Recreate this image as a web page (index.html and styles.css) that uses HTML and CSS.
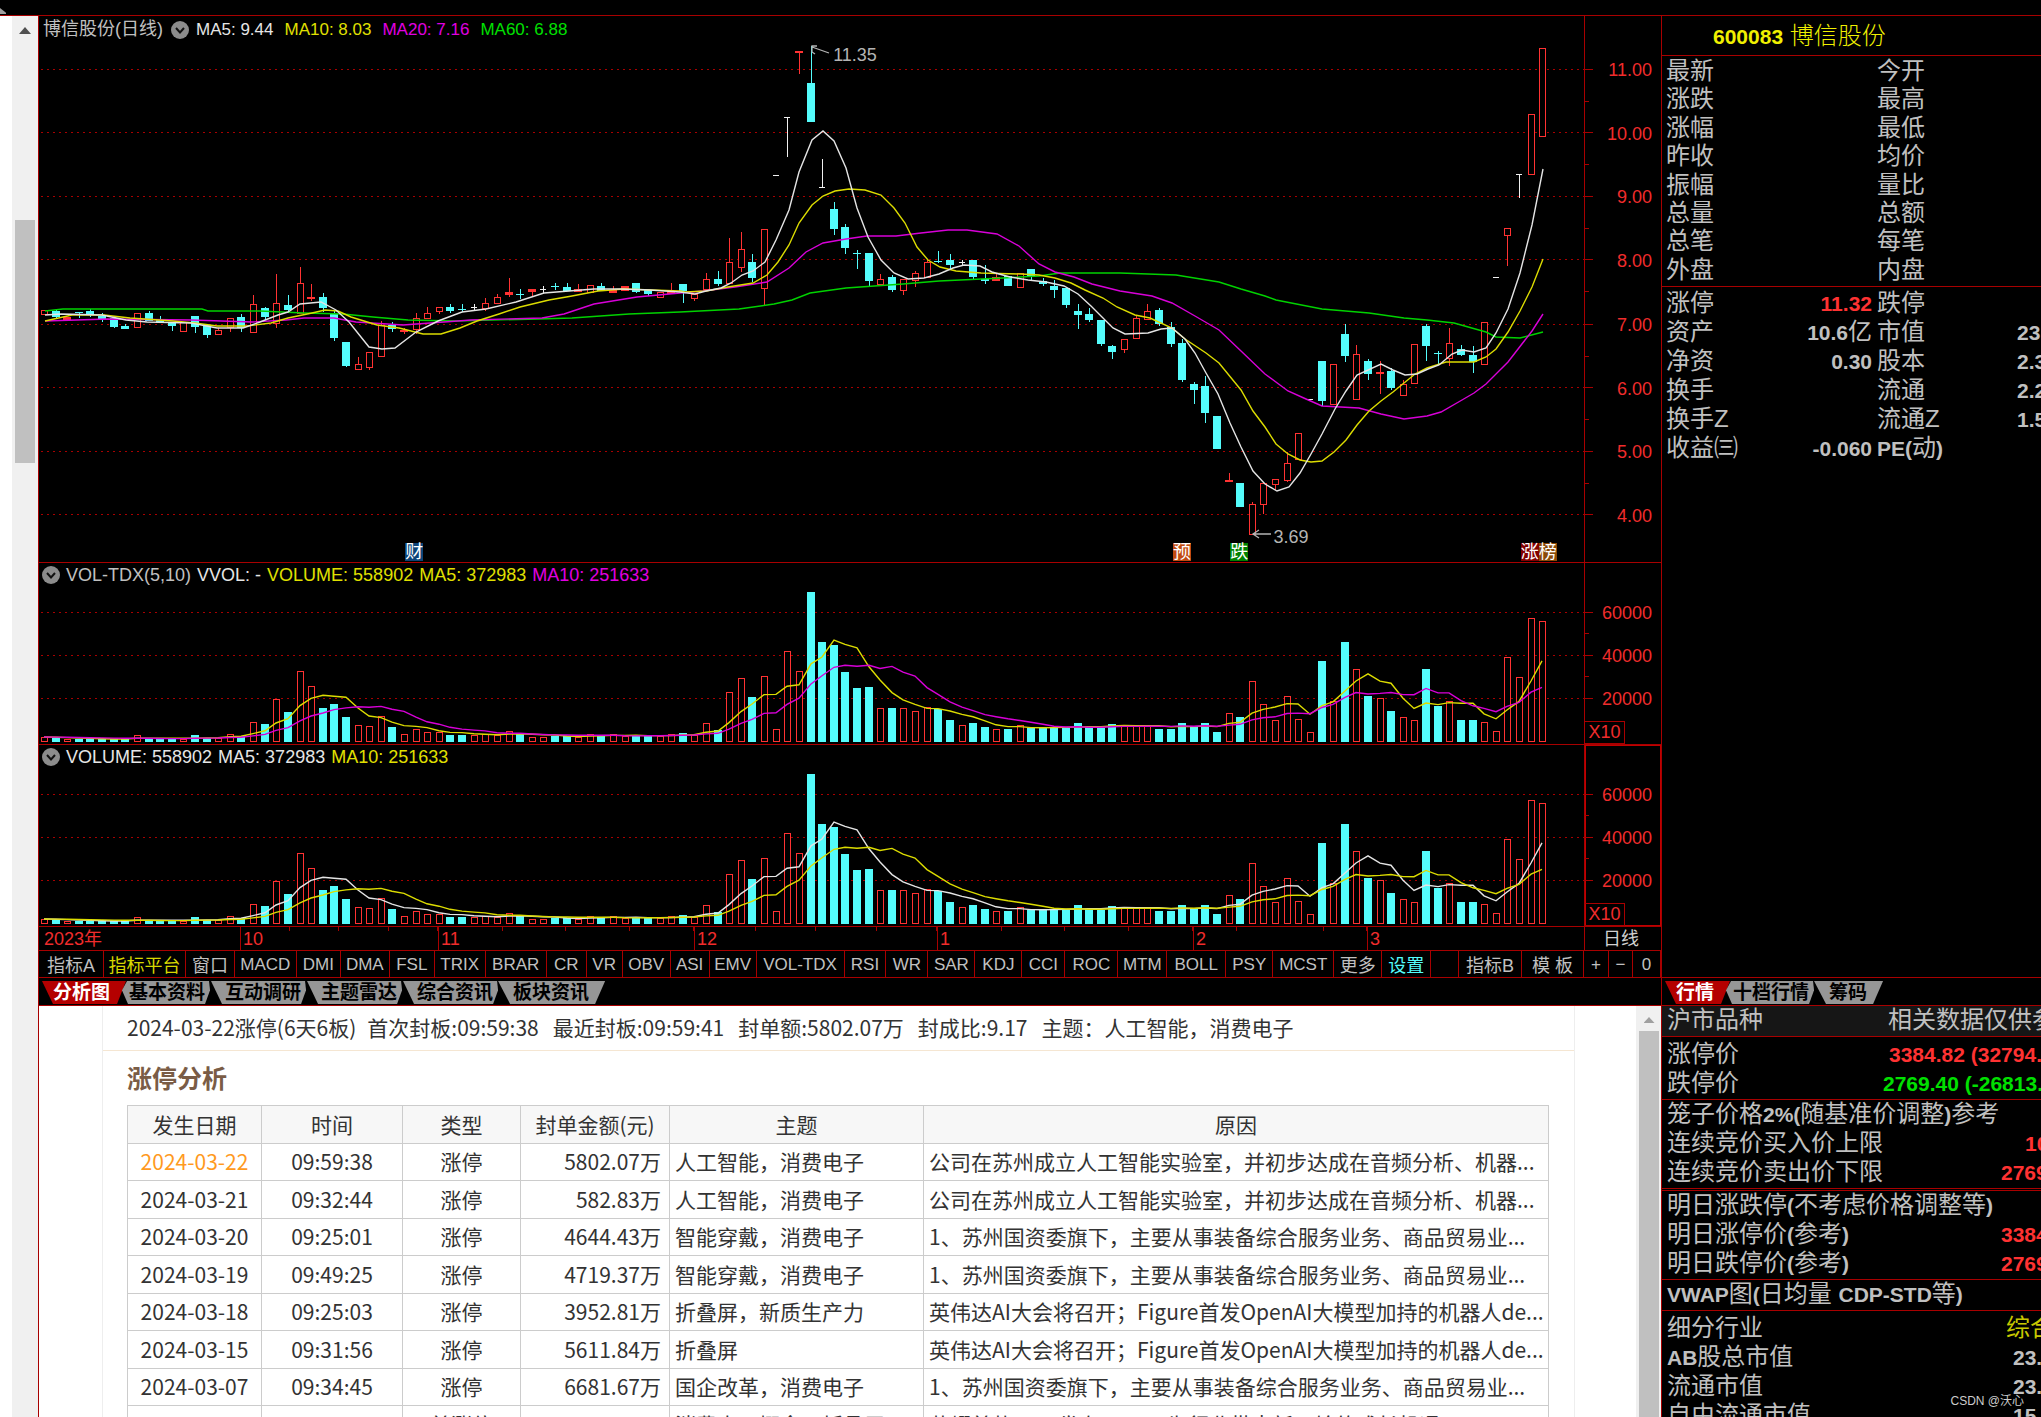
FILE: index.html
```html
<!DOCTYPE html>
<html lang="zh-CN">
<head>
<meta charset="utf-8">
<title>博信股份 600083</title>
<link rel="stylesheet" href="styles.css">
</head>
<body>
<div class="app">
  <div class="topbar"><span class="corner"></span></div>

  <aside class="gutter">
    <div class="gutter-track"><span class="arrow"></span><span class="gutter-thumb"></span></div>
  </aside>

  <main class="charts">
    <section class="pane pane-price">
      <div class="plot">
        <svg class="canvas" id="price" viewBox="39 16 1545 546" preserveAspectRatio="none"></svg>
        <header class="legend legend-price">
          <span class="name">博信股份(日线)</span>
          <svg class="chev" viewBox="0 0 18 18"><circle cx="9" cy="9" r="9" fill="#8c8c8c"/><path d="M5 7l4 4.500 4-4.500" fill="none" stroke="#111" stroke-width="2"/></svg>
          <span class="w">MA5: 9.44</span><span class="y">MA10: 8.03</span><span class="m">MA20: 7.16</span><span class="g">MA60: 6.88</span>
        </header>
        <span class="mark mark-high">11.35</span>
        <span class="mark mark-low">3.69</span>
        <span class="events ev-fin"><i class="blue">财</i></span>
        <span class="events ev-pre"><i class="orange">预</i></span>
        <span class="events ev-fall"><i class="green">跌</i></span>
        <span class="events ev-last"><i class="darkred">涨</i><i class="brown">榜</i></span>
      </div>
      <div class="axis axis-price">
        <svg class="canvas" id="price-axis" viewBox="0 16 76 546" preserveAspectRatio="none"></svg>
        <span>11.00</span><span>10.00</span><span>9.00</span><span>8.00</span><span>7.00</span><span>6.00</span><span>5.00</span><span>4.00</span>
      </div>
    </section>

    <section class="pane pane-vol">
      <div class="plot">
        <svg class="canvas" id="vol1" viewBox="39 0 1545 181" preserveAspectRatio="none"></svg>
        <header class="legend legend-vol">
          <svg class="chev" viewBox="0 0 18 18"><circle cx="9" cy="9" r="9" fill="#8c8c8c"/><path d="M5 7l4 4.500 4-4.500" fill="none" stroke="#111" stroke-width="2"/></svg>
          <span class="name">VOL-TDX(5,10)</span><span class="w">VVOL: -</span><span class="y">VOLUME: 558902</span><span class="y">MA5: 372983</span><span class="m">MA10: 251633</span>
        </header>
      </div>
      <div class="axis axis-vol">
        <svg class="canvas" id="vol1-axis" viewBox="0 0 76 181" preserveAspectRatio="none"></svg>
        <span>60000</span><span>40000</span><span>20000</span>
        <em class="unit">X10</em>
      </div>
    </section>

    <section class="pane pane-vol">
      <div class="plot">
        <svg class="canvas" id="vol2" viewBox="39 0 1545 181" preserveAspectRatio="none"></svg>
        <header class="legend legend-vol">
          <svg class="chev" viewBox="0 0 18 18"><circle cx="9" cy="9" r="9" fill="#8c8c8c"/><path d="M5 7l4 4.500 4-4.500" fill="none" stroke="#111" stroke-width="2"/></svg>
          <span class="w">VOLUME: 558902</span><span class="w">MA5: 372983</span><span class="y">MA10: 251633</span>
        </header>
      </div>
      <div class="axis axis-vol axis-active">
        <svg class="canvas" id="vol2-axis" viewBox="0 0 76 181" preserveAspectRatio="none"></svg>
        <span>60000</span><span>40000</span><span>20000</span>
        <em class="unit">X10</em>
      </div>
    </section>

    <div class="dates">
      <div class="months"><span>2023年</span><span>10</span><span>11</span><span>12</span><span>1</span><span>2</span><span>3</span></div>
      <div class="period">日线</div>
    </div>

    <nav class="tools">
      <button class="cn">指标A</button><button class="cn on">指标平台</button><button class="cn">窗口</button><button>MACD</button><button>DMI</button><button>DMA</button><button>FSL</button><button>TRIX</button><button>BRAR</button><button>CR</button><button>VR</button><button>OBV</button><button>ASI</button><button>EMV</button><button>VOL-TDX</button><button>RSI</button><button>WR</button><button>SAR</button><button>KDJ</button><button>CCI</button><button>ROC</button><button>MTM</button><button>BOLL</button><button>PSY</button><button>MCST</button><button class="cn">更多</button><button class="cn set">设置</button><span></span><button class="cn">指标B</button><button class="cn">模 板</button><button>+</button><button>−</button><button>0</button>
    </nav>
  </main>

  <aside class="quote">
    <h1><b>600083</b> 博信股份</h1>
    <dl class="grid8">
      <dt>最新</dt><dd></dd><dt>今开</dt><dd></dd>
      <dt>涨跌</dt><dd></dd><dt>最高</dt><dd></dd>
      <dt>涨幅</dt><dd></dd><dt>最低</dt><dd></dd>
      <dt>昨收</dt><dd></dd><dt>均价</dt><dd></dd>
      <dt>振幅</dt><dd></dd><dt>量比</dt><dd></dd>
      <dt>总量</dt><dd></dd><dt>总额</dt><dd></dd>
      <dt>总笔</dt><dd></dd><dt>每笔</dt><dd></dd>
      <dt>外盘</dt><dd></dd><dt>内盘</dt><dd></dd>
    </dl>
    <dl class="grid6">
      <dt>涨停</dt><dd class="r"><b>11.32</b></dd><dt>跌停</dt><dd></dd>
      <dt>资产</dt><dd><b>10.6</b>亿</dd><dt>市值</dt><dd class="cut"><b>23.</b></dd>
      <dt>净资</dt><dd><b>0.30</b></dd><dt>股本</dt><dd class="cut"><b>2.3</b></dd>
      <dt>换手</dt><dd></dd><dt>流通</dt><dd class="cut"><b>2.2</b></dd>
      <dt>换手Z</dt><dd></dd><dt>流通Z</dt><dd class="cut"><b>1.5</b></dd>
      <dt>收益㈢</dt><dd><b>-0.060</b></dd><dt><b>PE(</b>动<b>)</b></dt><dd></dd>
    </dl>
  </aside>

  <section class="lower">
    <nav class="tabs">
      <button class="tab first">分析图</button><button class="tab">基本资料</button><button class="tab">互动调研</button><button class="tab">主题雷达</button><button class="tab">综合资讯</button><button class="tab last">板块资讯</button>
    </nav>
    <div class="doc">
      <article class="sheet">
        <p class="summary"><span>2024-03-22涨停(6天6板)</span><span>首次封板:09:59:38</span><span>最近封板:09:59:41</span><span>封单额:5802.07万</span><span>封成比:9.17</span><span>主题：人工智能，消费电子</span></p>
        <h2>涨停分析</h2>
        <table>
          <colgroup><col class="c1"><col class="c2"><col class="c3"><col class="c4"><col class="c5"><col></colgroup>
          <thead><tr><th>发生日期</th><th>时间</th><th>类型</th><th>封单金额(元)</th><th>主题</th><th>原因</th></tr></thead>
          <tbody>
            <tr><td class="hot">2024-03-22</td><td>09:59:38</td><td>涨停</td><td>5802.07万</td><td>人工智能，消费电子</td><td>公司在苏州成立人工智能实验室，并初步达成在音频分析、机器...</td></tr>
            <tr><td>2024-03-21</td><td>09:32:44</td><td>涨停</td><td>582.83万</td><td>人工智能，消费电子</td><td>公司在苏州成立人工智能实验室，并初步达成在音频分析、机器...</td></tr>
            <tr><td>2024-03-20</td><td>09:25:01</td><td>涨停</td><td>4644.43万</td><td>智能穿戴，消费电子</td><td>1、苏州国资委旗下，主要从事装备综合服务业务、商品贸易业...</td></tr>
            <tr><td>2024-03-19</td><td>09:49:25</td><td>涨停</td><td>4719.37万</td><td>智能穿戴，消费电子</td><td>1、苏州国资委旗下，主要从事装备综合服务业务、商品贸易业...</td></tr>
            <tr><td>2024-03-18</td><td>09:25:03</td><td>涨停</td><td>3952.81万</td><td>折叠屏，新质生产力</td><td>英伟达AI大会将召开；Figure首发OpenAI大模型加持的机器人de...</td></tr>
            <tr><td>2024-03-15</td><td>09:31:56</td><td>涨停</td><td>5611.84万</td><td>折叠屏</td><td>英伟达AI大会将召开；Figure首发OpenAI大模型加持的机器人de...</td></tr>
            <tr><td>2024-03-07</td><td>09:34:45</td><td>涨停</td><td>6681.67万</td><td>国企改革，消费电子</td><td>1、苏州国资委旗下，主要从事装备综合服务业务、商品贸易业...</td></tr>
            <tr class="dim"><td>2024-02-29</td><td>00:00:00</td><td>首涨停</td><td></td><td>消费电子概念，折叠屏</td><td>荣耀首款AIPC发布，AIPC为行业带来新一轮的成长机遇</td></tr>
          </tbody>
        </table>
      </article>
      <div class="doc-track"><span class="arrow pale"></span><span class="doc-thumb"></span></div>
    </div>
  </section>

  <aside class="depth">
    <nav class="tabs">
      <button class="tab first">行情</button><button class="tab">十档行情</button><button class="tab last">筹码</button>
    </nav>
    <div class="block shade"><p><span>沪市品种</span><span class="v v-note">相关数据仅供参</span></p></div>
    <div class="block roomy">
      <p><span>涨停价</span><span class="v v-up r"><b>3384.82 (32794.</b></span></p>
      <p><span>跌停价</span><span class="v v-down g"><b>2769.40 (-26813.</b></span></p>
    </div>
    <div class="block double">
      <p><span>笼子价格<b>2%(</b>随基准价调整<b>)</b>参考</span></p>
      <p><span>连续竞价买入价上限</span><span class="v v-ten r"><b>10</b></span></p>
      <p><span>连续竞价卖出价下限</span><span class="v v-four r"><b>2769</b></span></p>
    </div>
    <div class="block">
      <p><span>明日涨跌停<b>(</b>不考虑价格调整等<b>)</b></span></p>
      <p><span>明日涨停价<b>(</b>参考<b>)</b></span><span class="v v-four r"><b>3384</b></span></p>
      <p><span>明日跌停价<b>(</b>参考<b>)</b></span><span class="v v-four r"><b>2769</b></span></p>
    </div>
    <div class="block"><p><span><b>VWAP</b>图<b>(</b>日均量 <b>CDP-STD</b>等<b>)</b></span></p></div>
    <div class="block roomy">
      <p><span>细分行业</span><span class="v v-sector">综合</span></p>
      <p><span><b>AB</b>股总市值</span><span class="v v-cap"><b>23.</b></span></p>
      <p><span>流通市值</span><span class="v v-cap"><b>23.</b></span></p>
      <p><span>自由流通市值</span><span class="v v-cap"><b>15.</b></span></p>
    </div>
  </aside>

  <span class="credit">CSDN @沃心</span>
</div>
<script src="chart.js"></script>
</body>
</html>
```
FILE: styles.css
```css
* { box-sizing: border-box; }
body {
  margin: 0;
  background: #000;
  color: #c0c0c0;
  font-family: "Liberation Sans", "Noto Sans CJK SC", sans-serif;
  font-size: 18px;
}
button {
  margin: 0;
  padding: 0;
  border: 0;
  background: none;
  color: inherit;
  font: inherit;
  white-space: nowrap;
}
h1, h2, p, dl, dt, dd { margin: 0; font-weight: 400; }
i, em { font-style: normal; }
.w { color: #e6e6e6; }
.y { color: #e0e000; }
.m { color: #e000e0; }
.g { color: #00e000; }
.r { color: #ff3232; }

.app {
  display: grid;
  grid-template-columns: 38px minmax(0, 1fr) 380px;
  grid-template-rows: 16px auto minmax(0, 1fr);
  height: 100vh;
  overflow: hidden;
}
.topbar { grid-column: 1 / 4; border-bottom: 1px solid #a80000; padding-top: 8px; }
.corner { display: block; width: 6px; height: 6px; background: #a0a0a0; clip-path: polygon(0 0, 100% 80%, 100% 100%, 0 100%); }

/* outer scroll bar */
.gutter { grid-row: 2 / 4; background: #fff; padding-left: 12px; }
.gutter-track { height: 100%; background: #f0f0f0; padding: 11px 3px 0; }
.arrow { display: block; width: 12px; height: 7px; margin: 0 auto; background: #505050; clip-path: polygon(50% 0, 100% 100%, 0 100%); }
.gutter-thumb { display: block; height: 243px; margin-top: 186px; background: #c0c0c0; }

/* charts */
.charts { border-left: 1px solid #a80000; min-width: 0; }
.pane { display: flex; border-bottom: 1px solid #a80000; }
.pane-price { height: 547px; }
.pane-vol { height: 182px; }
.plot { flex: 1; position: relative; min-width: 0; }
.canvas { position: absolute; left: 0; top: 0; width: 100%; height: 100%; }
.axis {
  position: relative;
  width: 77px;
  display: flex;
  flex-direction: column;
  justify-content: space-between;
  align-items: flex-end;
  border-left: 1px solid #a80000;
  color: #f02c2c;
  line-height: 20px;
  padding-right: 9px;
}
.axis-price { padding-top: 44px; padding-bottom: 36px; }
.axis-vol { padding-top: 40px; padding-bottom: 35px; }
.axis-active { box-shadow: inset 0 0 0 1px #c00000; }
.unit { position: absolute; left: 0; bottom: 0; width: 40px; height: 23px; border: 1px solid #a80000; border-left: 0; text-align: center; }
.legend { position: relative; display: flex; align-items: center; height: 24px; line-height: 20px; white-space: nowrap; }
.legend-price { gap: 11px; padding-left: 4px; height: 28px; font-size: 17px; }
.legend-price .name { font-size: 18px; margin-right: -3px; padding-bottom: 2px; }
.legend-vol { gap: 6px; padding-left: 3px; }
.legend-price .chev { margin-right: -4px; }
.chev { width: 18px; height: 18px; }
.mark { position: absolute; color: #b4b4b4; line-height: 20px; }
.mark-high { left: 51.4%; top: 29px; }
.mark-low { left: 79.9%; top: 511px; }
.events { position: absolute; bottom: 1px; display: flex; color: #fff; line-height: 18px; }
.events i { height: 18px; }
.ev-fin { left: 23.7%; }
.ev-pre { left: 73.4%; }
.ev-fall { left: 77.1%; }
.ev-last { left: 95.9%; }
.blue { background: #0c4478; }
.orange { background: #c04a10; }
.green { background: #008000; }
.darkred { background: #800000; }
.brown { background: #8a4a08; }

.dates { display: flex; height: 24px; border-bottom: 1px solid #a80000; line-height: 24px; }
.months { flex: 1; display: grid; grid-template-columns: 201fr 198fr 256fr 243fr 256fr 174fr 217fr; color: #f02c2c; }
.months span { height: 23px; padding-left: 2px; border-left: 1px solid #a80000; background: repeating-linear-gradient(to right, transparent 0 calc(25% - 1px), #a80000 calc(25% - 1px) 25%) 0 0 / 100% 4px no-repeat; }
.months span:first-child { border: 0; padding-left: 5px; background: none; }
.months span:last-child { background: none; }
.period { width: 77px; padding-left: 18px; border-left: 1px solid #a80000; color: #d0d0d0; }

.tools {
  display: grid;
  grid-template-columns: 65fr 82fr 49fr 62fr 44fr 49fr 45fr 51fr 61fr 40fr 36fr 48fr 39fr 47fr 88fr 42fr 42fr 47fr 47fr 43fr 53fr 49fr 59fr 47fr 61fr 48fr 49fr 28fr 63fr 62fr 25fr 24fr 28fr;
  height: 27px;
  font-size: 17px;
  border-bottom: 1px solid #a80000;
}
.tools > * { border-right: 1px solid #a80000; min-width: 0; padding-top: 2px; }
.tools .cn { font-size: 18px; padding-top: 0; }
.tools .on { color: #d8d800; }
.tools .set { color: #54fcfc; }

/* quote panel */
.quote { border-left: 1px solid #a80000; overflow: hidden; font-size: 24px; font-weight: 300; border-bottom: 1px solid #a80000; }
.quote b, .depth b { font-size: 21px; font-weight: 700; }
.quote h1 { height: 40px; line-height: 40px; padding-left: 51px; font-size: 24px; font-weight: 300; color: #f0f000; border-bottom: 1px solid #a80000; }
.quote dl { display: grid; grid-template-columns: 80px 126px 80px 1fr; grid-auto-rows: 1fr; padding-left: 4px; white-space: nowrap; }
.grid8 { height: 231px; padding-top: 1px; padding-bottom: 2px; border-bottom: 1px solid #a80000; }
.grid6 { height: 173px; padding-top: 2px; }
.quote dt, .quote dd { line-height: 28px; min-width: 0; }
.quote dd { text-align: right; }
.quote dt:nth-of-type(even) { padding-left: 5px; }
.quote .cut { width: 24px; justify-self: end; text-align: left; }

/* trapezoid tabs */
.tabs { display: flex; height: 28px; padding: 3px 0 2px 3px; border-bottom: 1px solid #a80000; font-size: 19px; font-weight: 700; line-height: 22px; color: #000; }
.tab { height: 23px; line-height: 22px; background: #969696; padding: 0 5px 0 15px; clip-path: polygon(1px 0, calc(100% - 1px) 0, 100% 40%, calc(100% - 5px) 100%, 12px 100%); }
.tab.first { background: #b40000; color: #fff; padding: 0 16px 0 11px; clip-path: polygon(0 0, 100% 0, calc(100% - 9px) 100%, 11px 100%); }
.tab.first + .tab { padding-left: 7px; margin-left: -4px; clip-path: polygon(5px 0, calc(100% - 1px) 0, 100% 40%, calc(100% - 5px) 100%, 6px 100%, 0 40%); }
.tab.last { padding-right: 16px; clip-path: polygon(0 0, 100% 0, calc(100% - 10px) 100%, 12px 100%); }

/* limit-up analysis document */
.lower { border-left: 1px solid #a80000; min-width: 0; display: flex; flex-direction: column; }
.doc { flex: 1; min-height: 0; display: flex; background: #fff; color: #333; padding-left: 63px; overflow: hidden; }
.sheet { flex: 1; min-width: 0; margin-right: 61px; border: 1px solid #eee; border-width: 0 1px; font-family: "Noto Sans CJK SC", sans-serif; font-size: 21px; }
.summary { display: flex; gap: 14px; height: 45px; line-height: 42px; padding-left: 24px; border-bottom: 1px solid #f5e6d2; white-space: nowrap; }
.summary span:first-child { margin-right: -3px; }
.sheet h2 { padding-left: 24px; height: 54px; line-height: 52px; font-size: 25px; font-weight: 700; color: #7a5c46; }
.sheet table { width: calc(100% - 49px); margin-left: 24px; border-collapse: collapse; table-layout: fixed; line-height: 30px; }
.c1 { width: 134px; }
.c2 { width: 141px; }
.c3 { width: 118px; }
.c4 { width: 149px; }
.c5 { width: 254px; }
.sheet th, .sheet td { border: 1px solid #ccc; padding: 0 5px 2px; white-space: nowrap; overflow: hidden; text-align: center; font-weight: 400; }
.sheet th { background: #f7f7f7; }
.sheet tr { height: 37px; }
.sheet thead tr, .sheet tr:nth-child(even) { height: 38px; }
.sheet td:nth-child(4) { text-align: right; padding-right: 8px; }
.sheet td:nth-child(n+5) { text-align: left; }
.sheet .hot { color: #ff9a1e; }
.sheet .dim td:nth-child(-n+2) { color: #999; }
.doc-track { width: 25px; background: #f0f0f0; padding: 11px 2px 0 3px; }
.doc-thumb { display: block; height: 100%; margin-top: 8px; background: #c0c0c0; }
.arrow.pale { background: #a0a0a0; width: 11px; height: 6px; }

/* reference price panel */
.depth { border-left: 1px solid #a80000; overflow: hidden; font-size: 24px; font-weight: 300; }
.block { border-bottom: 1px solid #a80000; padding: 0 0 1px 5px; }
.block.roomy { padding-top: 3px; }
.block.double { border-bottom: 3px double #a80000; }
.block.shade { background: #161616; }
.block p { display: flex; justify-content: space-between; height: 29px; line-height: 28px; white-space: nowrap; }
.v { overflow: hidden; }
.v-note { width: 153px; }
.v-up { width: 152px; }
.v-down { width: 158px; }
.v-ten { width: 16px; }
.v-four { width: 40px; }
.v-cap { width: 28px; }
.v-sector { width: 35px; color: #c8c800; }
.credit { position: absolute; right: 17px; bottom: 7px; font-size: 12px; line-height: 18px; color: #ccc; }
```
FILE: chart.js
```js
// Daily candles: kind, body top, body bottom, wick top, wick bottom.
// kinds: r = hollow up, R = flat up, c = down, w = unchanged
const candles = `
r310,314 c311,317,309,318 R317,320 c312,313,312,318 c311,315,309,317 c316,319,313,322 c318,327,318,328 c326,329,324,329
r313,327 c313,321,311,321 c320,323,316,323 c323,326,323,331 r322,331 c316,327,316,333 c325,335,325,338 r330,334,328,334
r318,327,318,332 c317,328,314,332 r304,332,295,332 c308,317,307,320 r303,323,274,328 c305,310,295,312 r283,313,267,313 R297,299,284,301
c297,308,293,312 c314,338,311,341 c342,366,342,367 r364,369,357,369 r352,367,352,370 r325,356,321,356 c325,329,322,332 R330,332,328,334
r318,329,313,334 r313,318,307,318 r307,311,307,314 c307,311,304,313 c309,310,304,312 w307,308,304,311 r303,308,298,311 r297,303,294,303
R292,295,278,297 c294,295,289,299 R289,292,289,296 w289,290,286,293 c286,287,283,290 c287,291,283,291 R289,292,284,292 r285,292
c286,291,283,291 R290,293,286,293 R286,291 c283,292,283,293 c290,294,290,296 r292,297 R291,294,283,294 c284,291,284,303
r294,298,294,301 r279,289,273,289 c279,284,271,286 r262,283,238,283 r249,267,232,272 c262,278,254,282 r229,288,229,305 w175,176
w117,118,117,157 R51,53,51,74 c83,122,46,122 w187,188,159,188 c209,229,202,235 c227,248,224,254 c253,254,250,269 c253,281,253,286
r279,284,274,284 c277,290,275,292 r279,290,279,295 r273,280,271,287 r262,277,260,277 c261,262,251,263 c260,265,254,269 w262,263,260,266
c260,277,260,279 c279,281,265,284 R277,281,273,281 c276,286 r273,287 c269,277,269,280 c281,284,278,286 c286,290,280,298
c288,305,288,308 c311,315,304,329 c314,320,308,322 c320,344,320,346 c346,352,345,359 r339,349,339,353 r318,338,316,338 r311,319,304,319
c310,324,308,326 c327,344,322,347 c343,380,339,382 c384,390,382,404 c386,413,376,423 c416,449 R480,482,473,482 c483,507
r504,534,502,534 r483,504,483,514 r479,484,479,490 r463,480,452,482 r433,459 w399,400 c361,401,361,406 r364,404
c334,356,324,362 r354,399,345,399 c361,374,359,380 R372,374,361,394 c371,388,368,390 r384,395,380,395 r344,383 c326,346,324,361
c353,354,351,364 r343,358,328,366 c349,355,345,356 c355,362,346,373 r322,364 w277,278 r228,235,228,266 w174,175,174,198
r114,174 r48,136`.trim().split(/\s+/).map(s => {
  const n = s.slice(1).split(',').map(Number);
  return { kind: s[0], top: n[0], bottom: n[1], high: n[2] ?? n[0], low: n[3] ?? n[1] };
});

const volumes = [5,4,3,3,3,3,3,3,7,3,3,3,3,7,4,4,8,6,20,18,43,30,71,56,34,38,25,17,16,26,15,8,13,10,10,7,7,7,8,7,11,8,5,5,6,6,5,8,6,8,6,6,6,6,8,9,7,19,12,50,64,45,66,13,91,71,150,100,97,70,54,55,34,34,34,31,35,33,22,17,19,15,13,13,17,14,14,14,14,19,15,14,18,17,17,16,13,13,19,16,19,10,29,25,61,38,22,46,23,10,81,41,100,73,46,44,31,25,22,73,36,41,22,22,20,11,85,65,124,121];

const averages = {
  '#00d200': '45,311 63,309 202,309 208,311 260,311 304,313 343,314 373,317 408,320 455,321 538,319 572,318 629,314 680,312 739,309 774,304 792,300 810,293 846,288 903,284 939,281 1003,278 1039,276 1060,273 1120,273 1176,275 1219,282 1241,289 1265,296 1276,300 1322,309 1369,313 1404,318 1427,320 1454,323 1486,332 1496,337 1520,338 1543,332',
  '#d800d8': '45,321 108,319 191,320 252,322 286,320 304,318 334,318 356,322 403,325 444,322 471,320 542,318 564,314 594,304 637,297 680,293 703,291 735,287 767,282 789,268 806,252 823,243 846,239 867,236 896,236 921,233 948,230 967,230 997,234 1019,246 1039,264 1055,272 1074,277 1092,284 1120,291 1152,296 1172,303 1195,316 1219,330 1241,351 1265,374 1288,391 1306,399 1322,406 1359,408 1381,414 1404,419 1427,416 1441,412 1462,400 1474,393 1486,384 1508,362 1532,331 1543,314',
  '#dcdc00': '45,321 72,315 104,315 130,318 173,321 195,323 217,326 247,326 271,323 288,318 312,313 325,310 338,311 351,317 377,325 399,328 423,334 441,334 460,328 477,321 499,314 520,307 549,300 572,296 598,291 624,289 680,291 685,292 706,291 728,287 753,283 767,275 778,262 789,245 799,223 812,205 823,196 835,191 849,189 865,190 881,195 894,208 905,223 917,247 928,260 940,267 956,271 981,273 1021,274 1039,275 1055,278 1071,283 1085,290 1103,298 1117,307 1135,315 1150,318 1172,328 1185,339 1206,353 1219,363 1241,390 1253,411 1265,427 1276,444 1288,454 1300,460 1311,462 1322,461 1334,452 1346,440 1357,425 1369,411 1381,401 1393,392 1415,374 1427,368 1446,362 1474,362 1486,357 1496,349 1508,332 1520,311 1532,287 1543,259',
  '#e4e4e4': '45,315 61,314 102,315 126,320 147,322 191,323 217,328 243,328 260,322 278,315 288,312 300,304 321,302 336,310 349,322 369,347 382,349 395,348 416,332 438,321 462,312 486,309 516,302 544,293 594,289 620,289 650,290 680,292 695,294 706,291 721,288 731,283 742,275 753,271 765,262 776,240 789,210 799,172 812,140 823,131 834,141 846,168 857,208 868,237 881,260 894,273 908,279 924,278 939,274 953,268 964,265 980,266 992,272 1010,277 1028,280 1046,282 1064,286 1078,294 1091,306 1102,317 1113,328 1125,334 1148,333 1161,329 1172,328 1185,339 1195,353 1206,373 1218,394 1230,423 1241,447 1253,471 1265,484 1277,491 1289,487 1300,473 1311,454 1322,434 1335,409 1346,391 1357,375 1381,364 1393,370 1405,375 1417,374 1428,369 1439,365 1452,354 1462,350 1474,352 1486,348 1496,333 1508,309 1520,273 1532,225 1543,169'
};

const RED = '#ff3232', CYAN = '#54fcfc', WHITE = '#f0f0f0', GRID = '#a80000';
const colour = k => (k === 'c' ? CYAN : k === 'w' ? WHITE : RED);
const centre = i => Math.round(44 + 11.614 * i);
const rect = (x, y, w, h, fill) => `<rect x="${x}" y="${y}" width="${w}" height="${h}" fill="${fill}"/>`;
const hollow = (x, y, w, h) => `<rect x="${x + .5}" y="${y + .5}" width="${w - 1}" height="${h - 1}" fill="#000" stroke="${RED}"/>`;
const crisp = s => `<g shape-rendering="crispEdges">${s}</g>`;
const line = (points, c) => `<polyline points="${points}" fill="none" stroke="${c}" stroke-width="1.400"/>`;
const dotted = y => `<path d="M41 ${y}.5H1584" stroke="${GRID}" stroke-dasharray="2 4"/>`;
const draw = (id, s) => { document.getElementById(id).innerHTML = s; };

function drawPrice() {
  const levels = [69, 132, 196, 259, 324, 387, 451, 514];
  let s = levels.map(dotted).join('');
  candles.forEach((d, i) => {
    const x = centre(i), c = colour(d.kind), h = Math.max(1, d.bottom - d.top);
    if (d.low > d.high) s += rect(x, d.high, 1, d.low - d.high, c);
    if (d.kind === 'r') s += hollow(x - 3, d.top, 7, h + 1);
    else if (d.kind === 'w') s += rect(x - 3, d.top, 6, h, c);
    else s += rect(x - 4, d.top, 8, h, c);
  });
  s = crisp(s);
  for (const c in averages) s += line(averages[c], c);
  s += '<path d="M829 53L812 47M817 46h-5v6l3 2M1271 534h-18M1259 530l-6 4 6 4" fill="none" stroke="#b4b4b4" stroke-width="1.300"/>';
  draw('price', s);
  let t = '';
  levels.forEach((y, i) => {
    t += rect(0, y, 8, 1, GRID);
    if (i < 7) t += rect(0, y + 32, 4, 1, GRID);
  });
  draw('price-axis', crisp(t));
}

function mean(n) {
  return volumes.map((_, i) => {
    const part = volumes.slice(Math.max(0, i - n + 1), i + 1);
    while (part.length < n) part.push(5);
    return `${centre(i)},${(179 - part.reduce((a, b) => a + b) / n).toFixed(1)}`;
  }).join(' ');
}

function drawVolume(id, fast, slow) {
  const levels = [49, 92, 135];
  let s = levels.map(dotted).join('');
  volumes.forEach((v, i) => {
    const x = centre(i);
    s += candles[i].kind === 'c' || i === 67 ? rect(x - 4, 179 - v, 8, v, CYAN) : hollow(x - 3, 179 - v, 7, v);
  });
  draw(id, crisp(s) + line(mean(5), fast) + line(mean(10), slow));
  draw(id + '-axis', crisp(levels.map(y => rect(0, y, 8, 1, GRID)).join('') + rect(0, 70, 4, 1, GRID) + rect(0, 113, 4, 1, GRID)));
}

drawPrice();
drawVolume('vol1', '#dcdc00', '#d800d8');
drawVolume('vol2', '#e4e4e4', '#dcdc00');
```
